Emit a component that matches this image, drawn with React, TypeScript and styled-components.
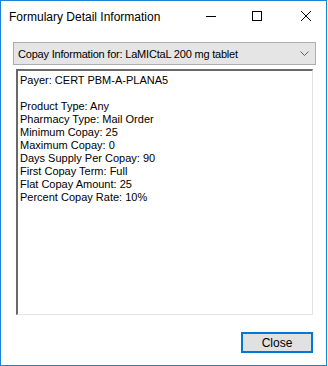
import React from "react";
import styled, { createGlobalStyle } from "styled-components";

const GlobalStyle = createGlobalStyle`
  html, body {
    margin: 0;
    padding: 0;
    background: #ffffff;
  }
`;

const lines = [
  "Payer: CERT PBM-A-PLANA5",
  "",
  "Product Type: Any",
  "Pharmacy Type: Mail Order",
  "Minimum Copay: 25",
  "Maximum Copay: 0",
  "Days Supply Per Copay: 90",
  "First Copay Term: Full",
  "Flat Copay Amount: 25",
  "Percent Copay Rate: 10%",
];

const App: React.FC = () => {
  return (
    <>
      <GlobalStyle />
      <Window>
        <TitleBar>
          <Title>Formulary Detail Information</Title>
          <Captions>
            <CaptionButton>
              <svg width="10" height="10" viewBox="0 0 10 10">
                <line x1="0" y1="5.5" x2="10" y2="5.5" stroke="#000" strokeWidth="1" />
              </svg>
            </CaptionButton>
            <CaptionButton>
              <svg width="10" height="10" viewBox="0 0 10 10">
                <rect x="0.5" y="0.5" width="9" height="9" fill="none" stroke="#000" strokeWidth="1" />
              </svg>
            </CaptionButton>
            <CaptionButton $shift={3}>
              <svg width="10" height="10" viewBox="0 0 10 10">
                <path d="M0 0 L10 10 M10 0 L0 10" stroke="#000" strokeWidth="1" />
              </svg>
            </CaptionButton>
          </Captions>
        </TitleBar>
        <Body>
          <Combo>
            <ComboText>Copay Information for: LaMICtaL 200 mg tablet</ComboText>
            <svg width="9" height="5" viewBox="0 0 9 5">
              <path d="M0.5 0.5 L4.5 4.5 L8.5 0.5" fill="none" stroke="#606060" strokeWidth="1" />
            </svg>
          </Combo>
          <TextBox>
            {lines.map((l, i) => (
              <Line key={i}>{l || "\u00a0"}</Line>
            ))}
          </TextBox>
          <Footer>
            <CloseButton>Close</CloseButton>
          </Footer>
        </Body>
      </Window>
    </>
  );
};

const Window = styled.div`
  width: 327px;
  height: 366px;
  box-sizing: border-box;
  border: 1px solid #1883d7;
  background: #ffffff;
  display: flex;
  flex-direction: column;
`;

const TitleBar = styled.div`
  height: 30px;
  display: flex;
  align-items: center;
  justify-content: space-between;
`;

const Title = styled.div`
  padding: 1px 0 0 8px;
  font-family: "Liberation Sans", Arial, sans-serif;
  font-size: 12px;
  color: #000;
`;

const Captions = styled.div`
  display: flex;
  height: 100%;
`;

const CaptionButton = styled.div<{ $shift?: number }>`
  width: 46px;
  height: 100%;
  box-sizing: border-box;
  padding-left: ${(p) => (p.$shift || 0) * 2}px;
  display: flex;
  align-items: center;
  justify-content: center;
`;

const Body = styled.div`
  flex: 1;
  display: flex;
  flex-direction: column;
  padding: 11px 0 0 12px;
`;

const Combo = styled.div`
  width: 303px;
  height: 23px;
  box-sizing: border-box;
  border: 1px solid #adadad;
  background: #e5e5e5;
  display: flex;
  align-items: center;
  justify-content: space-between;
  padding: 0 6px 0 4px;
`;

const ComboText = styled.span`
  font-family: "Liberation Sans", Arial, sans-serif;
  font-size: 11px;
  letter-spacing: -0.2px;
  color: #000;
`;

const TextBox = styled.div`
  margin: 4px 0 0 3px;
  width: 297px;
  height: 246px;
  box-sizing: border-box;
  border-style: solid;
  border-width: 2px 1px 1px 2px;
  border-color: #696969 #e3e3e3 #e3e3e3 #696969;
  background: #ffffff;
  padding: 3px 2px;
`;

const Line = styled.div`
  font-family: "Liberation Sans", Arial, sans-serif;
  font-size: 11px;
  line-height: 13px;
  color: #000;
  white-space: pre;
`;

const Footer = styled.div`
  width: 300px;
  display: flex;
  justify-content: flex-end;
  margin-top: 17px;
`;

const CloseButton = styled.button`
  width: 72px;
  height: 21px;
  box-sizing: border-box;
  border: 2px solid #0078d7;
  background: #e1e1e1;
  font-family: "Liberation Sans", Arial, sans-serif;
  font-size: 12px;
  color: #000;
  padding: 0;
  display: flex;
  align-items: center;
  justify-content: center;
`;

export default App;
